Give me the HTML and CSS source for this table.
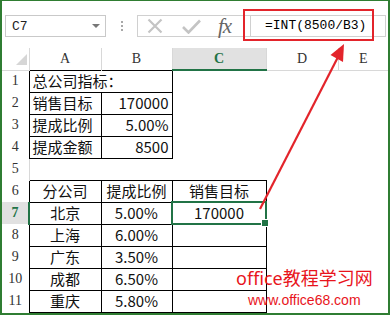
FILE: index.html
```html
<!DOCTYPE html>
<html lang="zh">
<head>
<meta charset="utf-8">
<link rel="stylesheet" href="styles.css">
</head>
<body>
<div class="frame">
  <div class="fbar">
    <div class="namebox"><span>C7</span><span class="nb-arrow"></span></div>
    <div class="grip"><i></i><i></i><i></i></div>
    <div class="fxbox">
      <div class="fxicons">
        <svg class="ic-x" width="16" height="16" viewBox="0 0 16 16"><path d="M1.5 1.5 L14.5 14.5 M14.5 1.5 L1.5 14.5" stroke="#c4c4c4" stroke-width="2.2" fill="none"/></svg>
        <svg class="ic-check" width="19" height="15" viewBox="0 0 19 15"><path d="M1 8 L6.5 13.5 L18 1.5" stroke="#c4c4c4" stroke-width="2.6" fill="none"/></svg>
        <span class="fx">fx</span>
      </div>
      <div class="finput">=INT(8500/B3)</div>
    </div>
  </div>
  <table class="sheet">
    <colgroup>
      <col class="c-rh"><col class="c-a"><col class="c-b"><col class="c-c"><col class="c-d"><col class="c-e">
    </colgroup>
    <tr class="hdr">
      <th class="corner"><span class="tri"></span></th>
      <th class="h-ab">A</th><th class="h-ab">B</th><th class="h-sel">C</th><th>D</th><th>E</th>
    </tr>
    <tr><th class="rh">1</th><td colspan="2" class="bx l">总公司指标：</td><td></td><td></td><td></td></tr>
    <tr><th class="rh">2</th><td class="bx l">销售目标</td><td class="bx r">170000</td><td></td><td></td><td></td></tr>
    <tr><th class="rh">3</th><td class="bx l">提成比例</td><td class="bx r">5.00%</td><td></td><td></td><td></td></tr>
    <tr><th class="rh">4</th><td class="bx l">提成金额</td><td class="bx r">8500</td><td></td><td></td><td></td></tr>
    <tr><th class="rh g">5</th><td></td><td></td><td></td><td></td><td></td></tr>
    <tr><th class="rh">6</th><td class="bx c">分公司</td><td class="bx c">提成比例</td><td class="bx c">销售目标</td><td></td><td></td></tr>
    <tr><th class="rh rsel">7</th><td class="bx c">北京</td><td class="bx c">5.00%</td><td class="bx c csel">170000</td><td></td><td></td></tr>
    <tr><th class="rh">8</th><td class="bx c">上海</td><td class="bx c">6.00%</td><td class="bx c"></td><td></td><td></td></tr>
    <tr><th class="rh">9</th><td class="bx c">广东</td><td class="bx c">3.50%</td><td class="bx c"></td><td></td><td></td></tr>
    <tr><th class="rh">10</th><td class="bx c">成都</td><td class="bx c">6.50%</td><td class="bx c"></td><td></td><td></td></tr>
    <tr><th class="rh">11</th><td class="bx c">重庆</td><td class="bx c">5.80%</td><td class="bx c"></td><td></td><td></td></tr>
    <tr><th class="rh g"></th><td></td><td></td><td></td><td></td><td></td></tr>
  </table>
</div>
<div class="callout"></div>
<svg class="arrow" width="392" height="317" viewBox="0 0 392 317">
  <line x1="260" y1="209" x2="338" y2="57" stroke="#e3242b" stroke-width="2.2"/>
  <polygon points="344,44 343,62 330.5,55" fill="#e3242b"/>
</svg>
<div class="watermark">
  <div class="wm1">office教程学习网</div>
  <div class="wm2">www.office68.com</div>
</div>
</body>
</html>
```

FILE: styles.css
```css
* { box-sizing: border-box; }
body {
  margin: 0;
  position: relative;
  width: 392px;
  height: 317px;
  overflow: hidden;
  background: #fff;
  font-family: "Noto Sans CJK SC", sans-serif;
}
.frame {
  width: 390px;
  height: 315px;
  border: 2px solid #2f7d32;
  border-top-width: 1px;
  overflow: hidden;
}
.fbar {
  height: 47px;
  display: flex;
  align-items: flex-start;
  padding-top: 14px;
  padding-left: 3px;
}
.namebox {
  width: 101px;
  height: 22px;
  border: 1px solid #c9c9c9;
  display: flex;
  align-items: center;
  justify-content: space-between;
  padding: 0 5px 0 6px;
  font: 13px "Liberation Mono", monospace;
  color: #222;
}
.nb-arrow {
  width: 0;
  height: 0;
  border-left: 4px solid transparent;
  border-right: 4px solid transparent;
  border-top: 4px solid #777;
}
.grip {
  margin-left: 15px;
  width: 2px;
  height: 22px;
  display: flex;
  flex-direction: column;
  justify-content: center;
  gap: 2px;
}
.grip i { display: block; width: 2px; height: 2px; background: #a8a8a8; }
.fxbox {
  margin-left: 14px;
  width: 249px;
  height: 22px;
  border: 1px solid #d0d0d0;
  display: flex;
}
.fxicons {
  width: 112px;
  display: flex;
  align-items: center;
}
.ic-x { margin-left: 9px; }
.ic-check { margin-left: 19px; }
.fx {
  margin-left: 17px;
  font: italic 21px "Liberation Serif", serif;
  color: #666;
  line-height: 20px;
  letter-spacing: -1px;
}
.finput {
  flex: 1;
  border-left: 1px solid #d0d0d0;
  padding-left: 14px;
  font: 13px "Liberation Mono", monospace;
  line-height: 20px;
  color: #000;
}
.sheet {
  border-collapse: collapse;
  table-layout: fixed;
  width: 386px;
}
.c-rh { width: 27px; }
.c-a { width: 72px; }
.c-b { width: 71px; }
.c-c { width: 94px; }
.c-d { width: 72px; }
.c-e { width: 50px; }
.sheet th {
  font: 14px "Liberation Serif", serif;
  font-weight: normal;
  color: #333;
  padding: 0;
  text-align: center;
}
.hdr { height: 17px; }
.hdr th {
  height: 17px;
  border-left: 1px solid #d8d8d8;
  border-bottom: 1px solid #d8d8d8;
  line-height: 15px;
}
.hdr th.corner { border-left: none; border-right: 1px solid #d8d8d8; }
.hdr th.h-ab { border-bottom: none; }
.hdr th.h-sel {
  background: #e1e1e1;
  color: #217346;
  font-weight: bold;
  border-bottom: 2px solid #217346;
}
.tri {
  display: block;
  width: 0;
  height: 0;
  margin: 2px 2px 0 auto;
  border-left: 11px solid transparent;
  border-bottom: 11px solid #d6d6d6;
}
.sheet tr { height: 22px; }
.sheet th.rh { height: 22px; }
.sheet th.g { border-right: 1px solid #d8d8d8; }
.sheet th.rsel {
  background: #e1e1e1;
  color: #217346;
  font-weight: bold;
  border-right: 2px solid #217346;
}
.sheet td {
  height: 22px;
  padding: 0 3px;
  white-space: nowrap;
  overflow: visible;
  font-size: 15px;
  line-height: 20px;
  color: #111;
}
.sheet td.bx { border: 1px solid #000; }
.sheet td.l { text-align: left; }
.sheet td.r { text-align: right; }
.sheet td.c { text-align: center; }
.sheet td.csel {
  position: relative;
  border: 2px solid #217346;
}
.sheet td.csel::after {
  content: "";
  position: absolute;
  right: -4px;
  bottom: -4px;
  width: 6px;
  height: 6px;
  background: #217346;
  border: 1px solid #fff;
}
.callout {
  position: absolute;
  left: 243px;
  top: 9px;
  width: 131px;
  height: 32px;
  border: 2px solid #e3242b;
}
.arrow {
  position: absolute;
  left: 0;
  top: 0;
  pointer-events: none;
}
.watermark {
  position: absolute;
  left: 236px;
  top: 266px;
  color: #e8141c;
}
.wm1 {
  font: 18px "Noto Sans", "Noto Sans CJK SC", sans-serif;
  line-height: 24px;
  white-space: nowrap;
}
.wm2 {
  margin-left: 12px;
  margin-top: 2px;
  font: 14px "Liberation Sans", sans-serif;
  line-height: 16px;
  white-space: nowrap;
}
```
